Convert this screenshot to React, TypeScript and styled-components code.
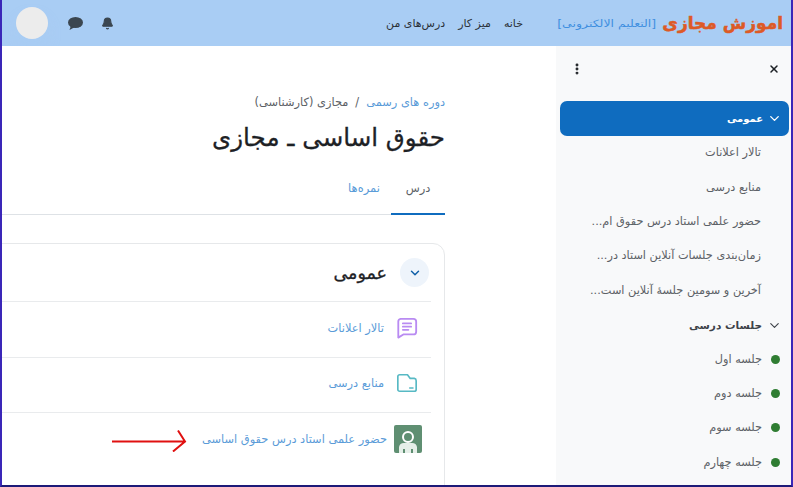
import * as React from 'react';
import styled, { createGlobalStyle } from 'styled-components';
import { ChevronDown, X, EllipsisVertical, Bell } from 'lucide-react';

const GlobalStyle = createGlobalStyle`
  html, body {
    margin: 0;
    height: 100%;
    background: #fff;
  }
  body {
    font-family: "DejaVu Sans", "Noto Sans", sans-serif;
  }
  * {
    box-sizing: border-box;
  }
`;

const Frame = styled.div`
  position: relative;
  width: 793px;
  height: 487px;
  overflow: hidden;
  border-left: 2px solid #3a26b8;
  border-right: 2px solid #3a26b8;
  border-bottom: 2px solid #1d1a78;
  display: flex;
  flex-direction: column;
`;

const Header = styled.header`
  flex: 0 0 46px;
  height: 46px;
  background: #a9cdf4;
  display: flex;
  align-items: center;
  direction: rtl;
  padding: 0 8px 0 14px;
`;

const Logo = styled.div`
  display: flex;
  align-items: center;
  gap: 6px;
  width: 260px;
`;

const LogoMark = styled.span`
  font-size: 17px;
  font-weight: 700;
  color: #dd5a26;
  -webkit-text-stroke: 0.5px #dd5a26;
  white-space: nowrap;
`;

const LogoTag = styled.span`
  display: inline-block;
  font-size: 10px;
  color: #3f8fe0;
  white-space: nowrap;
  transform: scaleX(1.25);
  transform-origin: right center;
`;

const TopNav = styled.nav`
  display: flex;
  gap: 13px;
`;

const TopLink = styled.a`
  font-size: 11px;
  color: #2b3138;
  white-space: nowrap;
`;

const HeaderEnd = styled.div`
  margin-right: auto;
  display: flex;
  align-items: center;
  direction: ltr;
  gap: 18px;
`;

const Avatar = styled.div`
  width: 32px;
  height: 32px;
  border-radius: 50%;
  background: #ececec;
  box-shadow: 0 10px 14px rgba(169, 205, 244, 0.25);
  margin-right: 2px;
`;

const Body = styled.div`
  flex: 1;
  min-height: 0;
  display: flex;
  direction: rtl;
`;

const Sidebar = styled.aside`
  flex: 0 0 235px;
  background: #f8f9fa;
  padding: 0 2px 0 4px;
  display: flex;
  flex-direction: column;
`;

const SideTop = styled.div`
  height: 55px;
  display: flex;
  align-items: center;
  justify-content: space-between;
  padding: 0 9px 10px 10px;
  color: #1d2125;
`;

const ActiveSection = styled.div`
  height: 35px;
  border-radius: 7px;
  background: #0f6cbf;
  color: #fff;
  display: flex;
  align-items: center;
  gap: 4px;
  padding: 0 7px 0 0;
  font-size: 10px;
  font-weight: 700;
`;

const SideList = styled.div`
  display: flex;
  flex-direction: column;
`;

const SideItem = styled.div`
  height: 34.4px;
  display: flex;
  align-items: center;
  padding-right: 28px;
  padding-bottom: 1px;
  font-size: 11.3px;
  color: #5c6166;
  white-space: nowrap;
`;

const SideSection = styled.div`
  height: 34.4px;
  display: flex;
  align-items: center;
  gap: 5px;
  padding-right: 7px;
  font-size: 10.5px;
  font-weight: 700;
  color: #3d4248;
`;

const DotItem = styled(SideItem)`
  padding-right: 9px;
  gap: 9px;
`;

const Dot = styled.span`
  width: 9px;
  height: 9px;
  border-radius: 50%;
  background: #2f7d32;
  flex: none;
`;

const Main = styled.main`
  flex: 1;
  min-width: 0;
  padding: 47px 111px 0 0;
  overflow: hidden;
  background: #fff;
`;

const Crumbs = styled.div`
  display: flex;
  gap: 7px;
  font-size: 11.4px;
  color: #5c6166;
  height: 18px;
  align-items: center;
`;

const CrumbLink = styled.a`
  color: #5a9bd8;
`;

const Title = styled.h1`
  margin: 10px 0 0;
  font-size: 24.5px;
  font-weight: 400;
  line-height: 34px;
  color: #1d2125;
  -webkit-text-stroke: 0.3px #1d2125;
`;

const Tabs = styled.div`
  display: flex;
  margin-top: 8px;
  height: 52px;
  border-bottom: 1px solid #dee2e6;
  margin-left: -10px;
`;

const Tab = styled.a<{ $active?: boolean }>`
  width: 54px;
  display: flex;
  align-items: center;
  justify-content: center;
  font-size: 11.5px;
  margin-bottom: -1px;
  color: ${(p) => (p.$active ? '#5c6166' : '#5a9bd8')};
  border-bottom: 2px solid ${(p) => (p.$active ? '#0f6cbf' : 'transparent')};
`;

const Card = styled.section`
  margin: 28px 0 0 -10px;
  border: 1px solid #e6e8ea;
  border-radius: 0 12px 0 0;
  padding: 0 13px 0 0;
  height: 260px;
`;

const CardHead = styled.div`
  height: 58px;
  display: flex;
  align-items: center;
  gap: 13px;
  padding-right: 2px;
  border-bottom: 1px solid #e9ebed;
`;

const Collapse = styled.span`
  width: 29px;
  height: 29px;
  border-radius: 50%;
  background: #eef4fb;
  color: #0f5fa8;
  display: flex;
  align-items: center;
  justify-content: center;
`;

const CardTitle = styled.h3`
  margin: 0;
  font-size: 17.5px;
  font-weight: 400;
  color: #1d2125;
  -webkit-text-stroke: 0.3px #1d2125;
`;

const Activity = styled.div<{ $last?: boolean }>`
  height: 55.5px;
  display: flex;
  align-items: center;
  gap: ${(p) => (p.$last ? '7px' : '12px')};
  padding-right: ${(p) => (p.$last ? '9px' : '13px')};
  padding-bottom: 3px;
  border-bottom: ${(p) => (p.$last ? 'none' : '1px solid #e9ebed')};
`;

const ActivityLink = styled.a`
  font-size: 11.4px;
  color: #5a9bd8;
  white-space: nowrap;
`;

const Arrow = styled.svg`
  position: absolute;
  left: 109px;
  top: 430px;
`;

const ForumIcon = () => (
  <svg width="22" height="22" viewBox="0 0 24 24" fill="none" stroke="#b98bf2" strokeWidth="2" strokeLinejoin="round" strokeLinecap="round">
    <path d="M5 2h14a3 3 0 0 1 3 3v11a3 3 0 0 1-3 3H8l-5.500 3.500V5A3 3 0 0 1 5 2z" />
    <path d="M7.500 7h9M7.500 10.500h9M7.500 14h6" />
  </svg>
);

const FolderIcon = () => (
  <svg width="22" height="22" viewBox="0 0 24 24" fill="none" stroke="#57b9c4" strokeWidth="1.800" strokeLinejoin="round" strokeLinecap="round">
    <path d="M4 3h8.500l3 4H20a2.500 2.500 0 0 1 2 2.500V19a2 2 0 0 1-2 2H4a2 2 0 0 1-2-2V5a2 2 0 0 1 2-2z" />
    <path d="M15 17.500h3.500" />
  </svg>
);

const PersonIcon = () => (
  <svg width="28" height="28" viewBox="0 0 28 28">
    <rect width="28" height="28" rx="2" fill="#5f8f72" />
    <circle cx="14" cy="12" r="5" fill="none" stroke="#fff" strokeWidth="2" />
    <path d="M5 28v-6a5 5 0 0 1 5-4h8a5 5 0 0 1 5 4v6h-4v-4h-2v4h-6v-4H9v4z" fill="#e6efe9" />
  </svg>
);

const ChatIcon = () => (
  <svg width="15" height="13" viewBox="0 0 15 13" fill="#3b4650">
    <ellipse cx="7.500" cy="5.500" rx="7.500" ry="5.500" />
    <path d="M3 8.500 1.500 13 7 10z" />
  </svg>
);

const sideItems = [
  'تالار اعلانات',
  'منابع درسی',
  'حضور علمی استاد درس حقوق ام...',
  'زمان‌بندی جلسات آنلاین استاد در...',
  'آخرین و سومین جلسهٔ آنلاین است...',
];

const sessions = ['جلسه اول', 'جلسه دوم', 'جلسه سوم', 'جلسه چهارم'];

export default function App() {
  return (
    <Frame>
      <GlobalStyle />
      <Header>
        <Logo>
          <LogoMark>اموزش مجازی</LogoMark>
          <LogoTag>[التعلیم الالکترونی]</LogoTag>
        </Logo>
        <TopNav>
          <TopLink>خانه</TopLink>
          <TopLink>میز کار</TopLink>
          <TopLink>درس‌های من</TopLink>
        </TopNav>
        <HeaderEnd>
          <Avatar />
          <ChatIcon />
          <Bell size={13} fill="#3b4650" color="#3b4650" />
        </HeaderEnd>
      </Header>
      <Body>
        <Sidebar>
          <SideTop>
            <X size={12} strokeWidth={3} />
            <EllipsisVertical size={14} strokeWidth={3} />
          </SideTop>
          <ActiveSection>
            <ChevronDown size={15} strokeWidth={2.2} />
            عمومی
          </ActiveSection>
          <SideList>
            {sideItems.map((t) => (
              <SideItem key={t}>{t}</SideItem>
            ))}
            <SideSection>
              <ChevronDown size={15} strokeWidth={1.8} />
              جلسات درسی
            </SideSection>
            {sessions.map((t) => (
              <DotItem key={t}>
                <Dot />
                {t}
              </DotItem>
            ))}
          </SideList>
        </Sidebar>
        <Main>
          <Crumbs>
            <CrumbLink>دوره های رسمی</CrumbLink>
            <span>/</span>
            <span>مجازی (کارشناسی)</span>
          </Crumbs>
          <Title>حقوق اساسی ـ مجازی</Title>
          <Tabs>
            <Tab $active>درس</Tab>
            <Tab>نمره‌ها</Tab>
          </Tabs>
          <Card>
            <CardHead>
              <Collapse>
                <ChevronDown size={14} strokeWidth={2.5} />
              </Collapse>
              <CardTitle>عمومی</CardTitle>
            </CardHead>
            <Activity>
              <ForumIcon />
              <ActivityLink>تالار اعلانات</ActivityLink>
            </Activity>
            <Activity>
              <FolderIcon />
              <ActivityLink>منابع درسی</ActivityLink>
            </Activity>
            <Activity $last>
              <PersonIcon />
              <ActivityLink>حضور علمی استاد درس حقوق اساسی</ActivityLink>
            </Activity>
          </Card>
        </Main>
      </Body>
      <Arrow width="76" height="22" viewBox="0 0 76 22" fill="none" stroke="#e01010" strokeWidth="2">
        <path d="M1 11.500h72M67 0.500l7 11-12 10" />
      </Arrow>
    </Frame>
  );
}
